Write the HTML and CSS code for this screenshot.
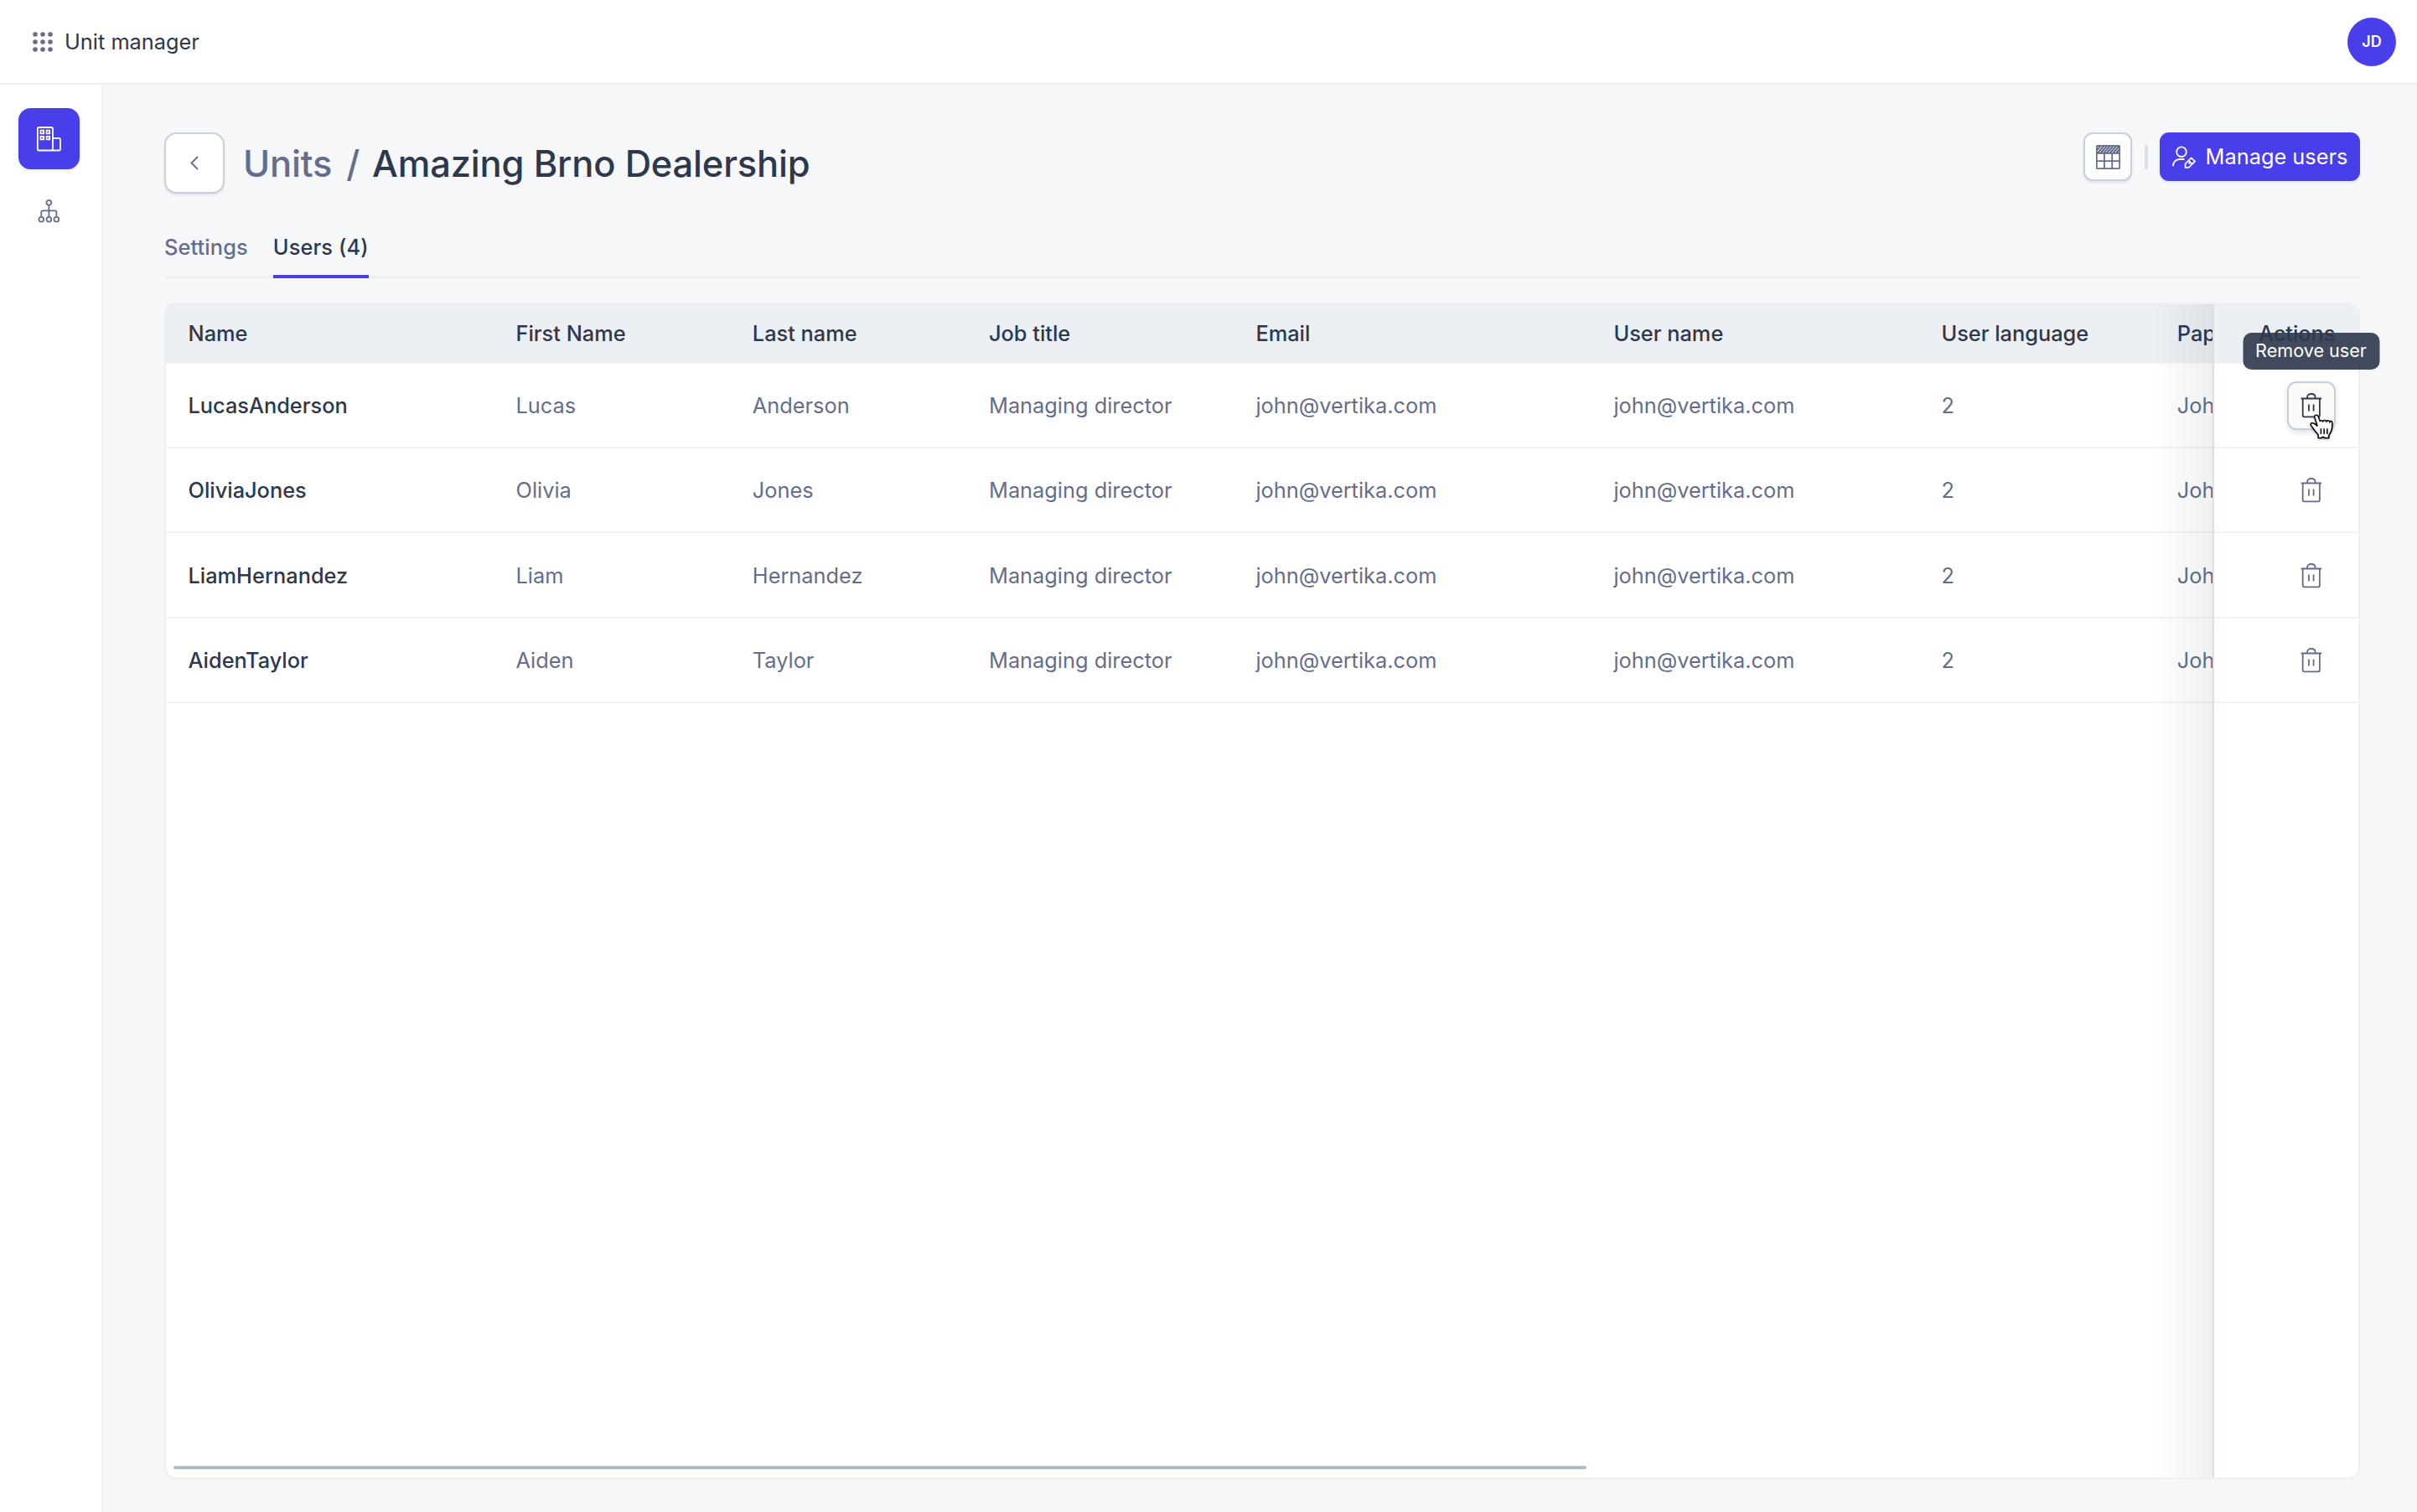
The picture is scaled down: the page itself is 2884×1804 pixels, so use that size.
FILE: index.html
```
<!DOCTYPE html>
<html lang="en">
<head>
  <meta charset="UTF-8">
  <meta name="viewport" content="width=device-width, initial-scale=1.0">
  <title>Unit manager</title>
  <link rel="stylesheet" href="styles.css">
</head>
<body>

  <!-- Shared icons -->
  <svg class="icon-defs" width="0" height="0">
    <symbol id="trash" viewBox="0 0 26 30">
      <path d="M0.6 6.5H25.2M8 6.3V5C8 2.6 10 1 12.8 1S17.6 2.6 17.6 5V6.3M2.7 6.5V26.6Q2.7 28.3 4.4 28.3H21.2Q22.9 28.3 22.9 26.6V6.5M10 13.4V21.6M15.6 13.4V21.6"/>
    </symbol>
  </svg>

  <!-- Top bar -->
  <header class="topbar">
    <div class="app">
      <svg class="dots" viewBox="0 0 24 24" width="24" height="24">
        <circle cx="3" cy="3" r="2.8"/><circle cx="12" cy="3" r="2.8"/><circle cx="21" cy="3" r="2.8"/>
        <circle cx="3" cy="12" r="2.8"/><circle cx="12" cy="12" r="2.8"/><circle cx="21" cy="12" r="2.8"/>
        <circle cx="3" cy="21" r="2.8"/><circle cx="12" cy="21" r="2.8"/><circle cx="21" cy="21" r="2.8"/>
      </svg>
      <span>Unit manager</span>
    </div>
    <div class="avatar">JD</div>
  </header>

  <div class="layout">
    <!-- Sidebar -->
    <nav class="sidebar">
      <a class="nav-item active">
        <svg viewBox="0 0 30 30" width="30" height="30">
          <path d="M2.2 1H17.2Q19 1 19 2.8V28.5H2.2Q.8 28.5.8 27V2.8Q.8 1 2.2 1ZM19 13.8H26.2Q28 13.8 28 15.6V26.8Q28 28.5 26.2 28.5H19"/>
          <path class="windows" d="M4.5 4.7H8.1V8.3H4.5ZM11.6 4.7H15.2V8.3H11.6ZM4.5 11.8H8.1V15.4H4.5ZM11.6 11.8H15.2V15.4H11.6Z"/>
        </svg>
      </a>
      <a class="nav-item">
        <svg viewBox="0 0 27 28" width="27" height="28">
          <circle cx="13.4" cy="3.8" r="2.9"/><circle cx="4.3" cy="23.7" r="2.9"/><circle cx="13.4" cy="23.7" r="2.9"/><circle cx="22.4" cy="23.7" r="2.9"/>
          <path d="M13.4 6.7V20.8M4.3 20.8V15Q4.3 13.3 6 13.3H20.7Q22.4 13.3 22.4 15V20.8"/>
        </svg>
      </a>
    </nav>

    <main class="content">
      <div class="page-head">
        <button class="back">
          <svg viewBox="0 0 10 17" width="10" height="17"><path d="M9 1L1.4 8.5L9 16"/></svg>
        </button>
        <h1><span class="crumb">Units</span><span class="slash">/</span>Amazing Brno Dealership</h1>
        <div class="tools">
          <button class="icon-btn">
            <svg viewBox="0 0 29 29" width="29" height="29">
              <rect x=".8" y=".8" width="27.4" height="27.4" rx="1.5"/>
              <path d="M.8 9.8H28.2M.8 19.2H28.2M9.9 9.8V28M19.2 9.8V28"/>
              <path class="hatch" d="M1 6L5.5 1M2 9.5L9.5 1M5.7 9.5L13.2 1M9.4 9.5L16.9 1M13.1 9.5L20.6 1M16.8 9.5L24.3 1M20.5 9.5L28 1M24.2 9.5L28.2 5"/>
            </svg>
          </button>
          <span class="divider"></span>
          <button class="primary">
            <svg viewBox="0 0 28 27" width="28" height="27">
              <circle cx="11" cy="7.2" r="5.8"/>
              <path d="M.9 24.2C.9 19.4 4.2 16 8.8 16H14.6"/>
              <path d="M15.6 21.3L22.7 14.4L27 18.5L19.6 25.8H15.6ZM19.4 17.6L23.6 21.6M19.6 21.4L21 20"/>
            </svg>
            Manage users
          </button>
        </div>
      </div>

      <div class="tabs">
        <a class="tab">Settings</a>
        <a class="tab active">Users (4)</a>
      </div>

      <!-- Users table, actions column stays on the right -->
      <section class="table">
        <div class="columns">
          <div class="row head"><span>Name</span><span>First Name</span><span>Last name</span><span>Job title</span><span>Email</span><span>User name</span><span>User language</span><span>Pap</span></div>
          <div class="row"><b>LucasAnderson</b><span>Lucas</span><span>Anderson</span><span>Managing director</span><span>john@vertika.com</span><span>john@vertika.com</span><span>2</span><span>Joh</span></div>
          <div class="row"><b>OliviaJones</b><span>Olivia</span><span>Jones</span><span>Managing director</span><span>john@vertika.com</span><span>john@vertika.com</span><span>2</span><span>Joh</span></div>
          <div class="row"><b>LiamHernandez</b><span>Liam</span><span>Hernandez</span><span>Managing director</span><span>john@vertika.com</span><span>john@vertika.com</span><span>2</span><span>Joh</span></div>
          <div class="row"><b>AidenTaylor</b><span>Aiden</span><span>Taylor</span><span>Managing director</span><span>john@vertika.com</span><span>john@vertika.com</span><span>2</span><span>Joh</span></div>
          <div class="fade"></div>
          <div class="scrollbar"></div>
        </div>
        <div class="actions">
          <div class="cell head">Actions</div>
          <div class="cell">
            <button class="remove hover">
              <svg width="26" height="30"><use href="#trash"/></svg>
              <span class="tooltip">Remove user</span>
              <svg class="cursor" viewBox="0 0 29 32" width="29" height="32">
                <path d="M7.2 1.3C5.6 1.6 5.5 3 6 4.5L9.2 14.6C7 12.3 4.3 10.2 2.3 10.8C.7 11.4 1 12.9 1.9 14.1L6 19.8C7.2 21.6 10 23.6 10.2 25.2V28.4H14.2L15.8 27.2L17.6 28.4H22.8V25.4C24.8 22.6 26.6 19.2 26.8 15.6V10.2C26.8 8.2 24.4 7.9 23.9 9.4C23.4 7.4 20.5 7.2 19.9 8.9C18.9 7 16.2 7.2 15.6 8.8C14.5 7.4 12.8 7.5 12.2 8.3L10.3 3.2C9.7 1.6 8.6 1 7.2 1.3Z"/>
                <path d="M13.4 17.2V24M17.1 17.2V24M20.9 17.2V24"/>
              </svg>
            </button>
          </div>
          <div class="cell"><button class="remove"><svg width="26" height="30"><use href="#trash"/></svg></button></div>
          <div class="cell"><button class="remove"><svg width="26" height="30"><use href="#trash"/></svg></button></div>
          <div class="cell"><button class="remove"><svg width="26" height="30"><use href="#trash"/></svg></button></div>
        </div>
      </section>
    </main>
  </div>

</body>
</html>
```

FILE: styles.css
```
/* Basic styling */
* {
  box-sizing: border-box;
}
body {
  margin: 0;
  height: 100vh;
  display: flex;
  flex-direction: column;
  font-family: Inter, sans-serif;
  font-size: 25.35px;
  line-height: 36px;
  color: #2f374b;
  background: #f5f7f9;
  overflow: hidden;
}
button {
  font: inherit;
  padding: 0;
  display: flex;
  align-items: center;
  justify-content: center;
}
svg {
  display: block;
  flex-shrink: 0;
  fill: none;
  stroke: currentColor;
  stroke-width: 1.8;
}
.icon-defs {
  position: absolute;
}

/* Top bar */
.topbar {
  height: 101px;
  flex-shrink: 0;
  display: flex;
  align-items: center;
  justify-content: space-between;
  padding: 0 25px 0 39px;
  background: #fff;
  border-bottom: 2px solid #eceff4;
}
.app {
  display: flex;
  align-items: center;
  gap: 14px;
}
.dots {
  fill: #656d8a;
  stroke: none;
}
.avatar {
  width: 58px;
  height: 58px;
  display: flex;
  align-items: center;
  justify-content: center;
  border-radius: 50%;
  background: #483eea;
  color: #fff;
  font-size: 18px;
  font-weight: 600;
}

.layout {
  flex: 1;
  min-height: 0;
  display: flex;
}

/* Sidebar */
.sidebar {
  width: 123px;
  flex-shrink: 0;
  padding: 28px 0 0 22px;
  display: flex;
  flex-direction: column;
  gap: 13px;
  background: #fff;
  border-right: 2px solid #eff2f6;
}
.nav-item {
  width: 73px;
  height: 73px;
  display: flex;
  align-items: center;
  justify-content: center;
  border-radius: 14.5px;
  color: #656d8a;
}
.nav-item.active {
  background: #483eea;
  color: #fff;
  box-shadow: 0 2px 4px rgba(47, 55, 75, 0.12);
}

/* Page */
.content {
  flex: 1;
  min-width: 0;
  display: flex;
  flex-direction: column;
  padding: 57px 68px 39.5px 73px;
}
.page-head {
  display: flex;
  align-items: center;
  height: 73px;
}
.back,
.icon-btn {
  background: #fff;
  color: #656d8a;
  border: 2px solid #c7d0dd;
  box-shadow: 0 2px 3px rgba(47, 55, 75, 0.1);
}
.back {
  width: 72px;
  height: 73px;
  border-radius: 14.5px;
}
h1 {
  margin: 0 0 0 22px;
  font-size: 43.5px;
  line-height: 58px;
  font-weight: 500;
  letter-spacing: -0.2px;
}
.crumb,
.slash {
  color: #656d8a;
}
.slash {
  margin: 0 15px 0 17px;
}
.tools {
  margin-left: auto;
  align-self: flex-start;
  display: flex;
  align-items: center;
}
.icon-btn {
  width: 58px;
  height: 58px;
  border-radius: 11px;
}
.hatch {
  stroke-width: 2.1;
}
.divider {
  width: 4px;
  height: 29px;
  margin: 0 14.5px;
  border-radius: 2px;
  background: #d8dfe8;
}
.primary {
  width: 239px;
  height: 58px;
  gap: 12px;
  border: none;
  border-radius: 11px;
  background: #483eea;
  color: #fff;
  box-shadow: 0 2px 3px rgba(47, 55, 75, 0.1);
}

/* Tabs */
.tabs {
  display: flex;
  gap: 30px;
  height: 55px;
  margin-top: 46px;
  flex-shrink: 0;
  box-shadow: inset 0 -3px #eceff4;
}
.tab {
  font-weight: 500;
  letter-spacing: 0.12px;
  color: #656d8a;
}
.tab.active {
  color: #2f374b;
  border-bottom: 4px solid #483eea;
}

/* Table */
.table {
  position: relative;
  flex: 1;
  display: flex;
  margin-top: 29px;
  background: #fff;
  border: 2px solid #eceff4;
  border-radius: 14.5px;
}
.columns {
  position: relative;
  flex: 1;
  min-width: 0;
  overflow: hidden;
}
.row {
  height: 101.4px;
  display: grid;
  grid-template-columns: 391px 282.3px 282.2px 318.4px 427px 391px 281.4px 282px;
  align-items: center;
  padding: 1px 0 0 26.5px;
  border-bottom: 2px solid #eff2f6;
  color: #656d8a;
}
.row b {
  font-weight: 500;
  color: #2f374b;
}
.row.head,
.cell.head {
  height: 70.6px;
  font-weight: 500;
  color: #2f374b;
  background: #eceff4;
}
.fade {
  position: absolute;
  top: 0;
  right: 0;
  bottom: 0;
  width: 70px;
  background: linear-gradient(to right, rgba(0, 0, 0, 0), rgba(0, 0, 0, 0.06));
}
.scrollbar {
  position: absolute;
  left: 9px;
  bottom: 10px;
  width: 1686px;
  height: 4px;
  border-radius: 2px;
  background: #b0bccb;
}

/* Actions column */
.actions {
  width: 174px;
  flex-shrink: 0;
  border-left: 2px solid #d8dfe8;
}
.cell {
  height: 101.4px;
  display: flex;
  align-items: center;
  justify-content: flex-end;
  padding: 1px 27.5px 0 0;
  border-bottom: 2px solid #eff2f6;
}
.cell.head {
  border-top-right-radius: 12px;
}
.remove {
  position: relative;
  width: 58px;
  height: 58px;
  border: 2px solid transparent;
  border-radius: 11px;
  background: none;
  color: #656d8a;
}
.remove.hover {
  color: #2f374b;
  background: #fafafb;
  border-color: #c7d0dd;
  box-shadow: 0 3px 6px rgba(47, 55, 75, 0.15);
}
.tooltip {
  position: absolute;
  bottom: 70px;
  left: 50%;
  transform: translateX(-50%);
  width: 163px;
  height: 44px;
  border-radius: 10px;
  background: rgba(47, 55, 75, 0.9);
  color: #fff;
  font-size: 21.6px;
  line-height: 43px;
  text-align: center;
}
.cursor {
  position: absolute;
  left: 25.5px;
  top: 37.5px;
  fill: #fff;
  stroke: #000;
  stroke-width: 1.5;
  filter: drop-shadow(0 1.5px 1px rgba(0, 0, 0, 0.35));
}
```
